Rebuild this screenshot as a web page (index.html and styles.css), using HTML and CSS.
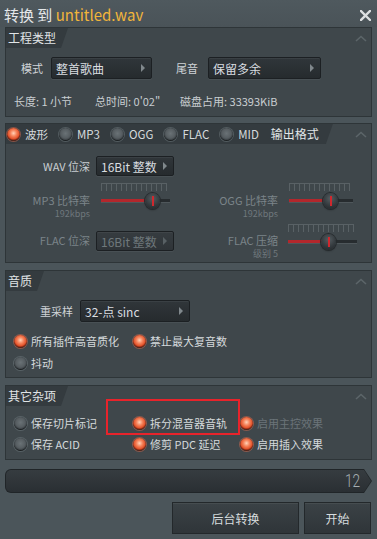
FILE: index.html
```html
<!DOCTYPE html>
<html lang="zh">
<head>
<meta charset="utf-8">
<title>转换 到 untitled.wav</title>
<link rel="stylesheet" href="styles.css">
</head>
<body>
<div class="titlebar">
  <div class="title">转换 到 <span class="file">untitled.wav</span></div>
  <svg class="close" width="11" height="11" viewBox="0 0 11 11"><path d="M1 1 L10 10 M10 1 L1 10" stroke="#dcdfe1" stroke-width="2.4" stroke-linecap="square"/></svg>
</div>

<section class="panel p1">
  <div class="phead">
    <div class="tab">工程类型</div>
    <svg class="caret" width="12" height="7" viewBox="0 0 12 7"><polyline points="1,6 6,1.5 11,6" fill="none" stroke="#5c6569" stroke-width="1.6"/></svg>
  </div>
  <div class="body">
    <div class="dd-row">
      <span class="lbl">模式</span><div class="dd">整首歌曲</div>
      <span class="lbl">尾音</span><div class="dd">保留多余</div>
    </div>
    <div class="info">
      <span>长度: 1 小节</span><span>总时间: 0'02"</span><span>磁盘占用: 33393KiB</span>
    </div>
  </div>
</section>

<section class="panel p2">
  <div class="phead">
    <div class="tab tab-opts">
      <span class="opt"><i class="rb on"></i>波形</span>
      <span class="opt"><i class="rb"></i>MP3</span>
      <span class="opt"><i class="rb"></i>OGG</span>
      <span class="opt"><i class="rb"></i>FLAC</span>
      <span class="opt"><i class="rb"></i>MID</span>
      <span class="tab-title">输出格式</span>
    </div>
    <svg class="caret" width="12" height="7" viewBox="0 0 12 7"><polyline points="1,6 6,1.5 11,6" fill="none" stroke="#5c6569" stroke-width="1.6"/></svg>
  </div>
  <div class="body fmt">
    <span class="lbl l1 r1">WAV 位深</span>
    <div class="dd small r1c">16Bit 整数</div>

    <div class="lblock l1 r2"><div class="dim">MP3 比特率</div><div class="sub">192kbps</div></div>
    <div class="slider s-mp3">
      <div class="ticks"></div>
      <div class="track"><div class="fill" style="width:49px"></div><div class="knob" style="left:44px"></div></div>
    </div>
    <div class="lblock l3 r2"><div class="dim">OGG 比特率</div><div class="sub">192kbps</div></div>
    <div class="slider s-ogg">
      <div class="ticks"></div>
      <div class="track"><div class="fill" style="width:36px"></div><div class="knob" style="left:34px"></div></div>
    </div>

    <span class="lbl l1 r3 dim">FLAC 位深</span>
    <div class="dd small dis r3c">16Bit 整数</div>
    <div class="lblock l3 r3"><div class="dim">FLAC 压缩</div><div class="sub">级别 5</div></div>
    <div class="slider s-flac">
      <div class="ticks"></div>
      <div class="track"><div class="fill" style="width:34px"></div><div class="knob" style="left:33px"></div></div>
    </div>
  </div>
</section>

<section class="panel p3">
  <div class="phead">
    <div class="tab">音质</div>
    <svg class="caret" width="12" height="7" viewBox="0 0 12 7"><polyline points="1,6 6,1.5 11,6" fill="none" stroke="#5c6569" stroke-width="1.6"/></svg>
  </div>
  <div class="body">
    <div class="rs-row"><span class="lbl">重采样</span><div class="dd rs">32-点 sinc</div></div>
    <div class="opts q-opts">
      <span class="opt"><i class="rb on"></i>所有插件高音质化</span>
      <span class="opt"><i class="rb on"></i>禁止最大复音数</span>
      <span></span>
      <span class="opt"><i class="rb"></i>抖动</span>
    </div>
  </div>
</section>

<section class="panel p4">
  <div class="phead">
    <div class="tab">其它杂项</div>
    <svg class="caret" width="12" height="7" viewBox="0 0 12 7"><polyline points="1,6 6,1.5 11,6" fill="none" stroke="#5c6569" stroke-width="1.6"/></svg>
  </div>
  <div class="body">
    <div class="opts m-opts">
      <span class="opt"><i class="rb"></i>保存切片标记</span>
      <span class="opt"><i class="rb on"></i>拆分混音器音轨</span>
      <span class="opt disabled"><i class="rb on"></i>启用主控效果</span>
      <span class="opt"><i class="rb"></i>保存 ACID</span>
      <span class="opt"><i class="rb on"></i>修剪 PDC 延迟</span>
      <span class="opt"><i class="rb on"></i>启用插入效果</span>
    </div>
  </div>
  <div class="highlight"></div>
</section>

<div class="progress"><div class="bar"><span class="num">12</span></div></div>

<div class="actions">
  <div class="btn wide">后台转换</div>
  <div class="btn narrow">开始</div>
</div>
</body>
</html>
```

FILE: styles.css
```css
* { box-sizing: border-box; }
html, body { margin: 0; padding: 0; }
body {
  width: 377px;
  height: 539px;
  overflow: hidden;
  background: #4b555a;
  font-family: "Noto Sans CJK SC", "Noto Sans", sans-serif;
  font-size: 11px;
  color: #cdd3d6;
}

.titlebar {
  height: 27px;
  display: flex;
  align-items: center;
  justify-content: space-between;
  padding: 3px 6px 0 4px;
  background: linear-gradient(#4f595e, #4a5358);
}
.title { font-size: 15px; line-height: 20px; color: #e4e7e9; }
.title .file { color: #f2b53a; }

.panel {
  margin: 0 5px;
  border: 1px solid #2e3538;
  background: #3f474b;
  position: relative;
}
.p1 { height: 90px; }
.p2 { margin-top: 6px; height: 140px; }
.p3 { margin-top: 7px; height: 108px; }
.p4 { margin-top: 7px; height: 75px; }

.phead {
  height: 20px;
  display: flex;
  align-items: center;
  justify-content: space-between;
}
.tab {
  height: 20px;
  line-height: 20px;
  padding: 0 12px 0 2px;
  background: #343b3f;
  clip-path: polygon(0 0, 100% 0, calc(100% - 7px) 100%, 0 100%);
  font-size: 12px;
  color: #e1e5e7;
}
.caret { margin-right: 4px; }

.tab-opts {
  display: flex;
  align-items: center;
  gap: 11px;
  padding: 0 14px 0 1px;
  font-size: 11.5px;
}
.tab-opts .opt { gap: 5px; }
.tab-title { font-size: 12px; color: #e1e5e7; margin-left: 1px; }

.opt {
  display: flex;
  align-items: center;
  gap: 4px;
  line-height: 16px;
  white-space: nowrap;
  color: #d5dadc;
}
.opt.disabled { color: #6b7479; }

.rb {
  display: inline-block;
  flex: none;
  width: 13px;
  height: 13px;
  border-radius: 50%;
  background: radial-gradient(circle at 50% 42%, #6a7276 0, #555c60 48%, #3e4448 62%, #1c2022 70%, #1c2022 100%);
  box-shadow: 0 0 0 1px rgba(120,130,135,0.45);
}
.rb.on {
  background: radial-gradient(circle at 50% 40%, #ffd2b8 0, #f6845c 30%, #e2542c 55%, #8e2a14 66%, #3a1a12 76%, #2a1d1a 100%);
  box-shadow: 0 0 0 1px rgba(230,110,80,0.45);
}

.lbl { white-space: nowrap; }

.dd {
  height: 22px;
  display: flex;
  align-items: center;
  justify-content: space-between;
  padding: 0 6px 0 4px;
  background: linear-gradient(#30363a, #262b2e);
  border: 1px solid #1c2023;
  border-radius: 2px;
  font-size: 12px;
  color: #d9dde0;
  box-shadow: inset 0 1px 0 rgba(255,255,255,0.05), 0 1px 0 rgba(255,255,255,0.05);
  white-space: nowrap;
}
.dd::after {
  content: "";
  border-left: 4px solid #80888c;
  border-top: 4px solid transparent;
  border-bottom: 4px solid transparent;
}
.dd.dis { color: #6f787c; background: linear-gradient(#363c40, #2f3438); }
.dd.dis::after { border-left-color: #586064; }

/* panel 1 */
.p1 .body { padding-top: 9px; }
.dd-row {
  display: grid;
  grid-template-columns: 45px 101px 56px 113px;
  height: 22px;
  align-items: center;
}
.dd-row .lbl { text-align: right; padding-right: 8px; color: #cfd4d7; }
.dd-row .lbl:nth-of-type(2) { padding-right: 10px; }
.info {
  margin-top: 15px;
  display: grid;
  grid-template-columns: 81px 85px auto;
  padding-left: 8px;
  line-height: 14px;
  color: #c9ced1;
}

/* panel 2 */
.fmt {
  padding-top: 12px;
  display: grid;
  grid-template-columns: 90px 100px 92px 1fr;
  grid-template-rows: 20px 45px 38px;
}
.fmt .l1 { grid-column: 1; text-align: right; padding-right: 6px; }
.fmt .l3 { grid-column: 3; text-align: right; padding-right: 10px; }
.fmt .r1 { grid-row: 1; align-self: center; line-height: 14px; color: #c8ced1; }
.fmt .r1c { grid-row: 1; grid-column: 2; }
.dd.small { height: 20px; width: 78px; }
.fmt .r2 { grid-row: 2; margin-top: 17px; }
.fmt .r3 { grid-row: 3; margin-top: 12px; }
.fmt .r3c { grid-row: 3; grid-column: 2; margin-top: 10px; }
.lbl.r3 { line-height: 14px; }
.lblock { line-height: 14px; }
.dim { color: #7b8489; white-space: nowrap; }
.sub { font-size: 9px; line-height: 11px; margin-top: 1px; color: #6f787d; }

.slider { align-self: start; }
.s-mp3 { grid-row: 2; grid-column: 2; margin: 7px 0 0 5px; width: 69px; }
.s-ogg { grid-row: 2; grid-column: 4; margin: 7px 0 0 1px; width: 64px; }
.s-flac { grid-row: 3; grid-column: 4; margin: 3px 0 0 0; width: 69px; }

.ticks {
  height: 8px;
  margin-right: 3px;
  border-top: 1px solid #596165;
  border-left: 1px solid #596165;
  border-right: 1px solid #596165;
  background: repeating-linear-gradient(to right, transparent 0 4px, #596165 4px 5px);
}
.track {
  position: relative;
  height: 16px;
  margin-top: 2px;
}
.track::before {
  content: "";
  position: absolute;
  left: 0; right: 0; top: 6px;
  height: 3px;
  background: #272c2f;
  border-bottom: 1px solid #4f575b;
}
.fill {
  position: absolute;
  left: 0; top: 6px;
  height: 3px;
  background: #b3272c;
}
.knob {
  position: absolute;
  top: 0;
  width: 15px;
  height: 16px;
  border-radius: 50%;
  background: radial-gradient(circle at 50% 35%, #555d61 0, #343a3e 55%, #1f2326 100%);
  box-shadow: 0 0 0 1px #262b2e, 0 1px 2px rgba(0,0,0,0.4);
}
.knob::after {
  content: "";
  position: absolute;
  left: 7px; top: 3px;
  width: 1.5px; height: 10px;
  background: #cf282e;
}

/* panel 3 */
.p3 .body { padding-top: 9px; }
.rs-row { display: flex; align-items: center; height: 22px; }
.rs-row .lbl { width: 74px; text-align: right; padding-right: 7px; color: #cfd4d7; }
.dd.rs { width: 110px; }

.opts {
  display: grid;
  grid-template-columns: 119px 107px 1fr;
  grid-auto-rows: 16px;
  padding-left: 8px;
}
.q-opts { margin-top: 11px; row-gap: 6px; }
.q-opts .opt:nth-child(4) { grid-column: 1; }

/* panel 4 */
.p4 .body { padding-top: 9px; }
.m-opts { row-gap: 5px; }

.highlight {
  position: absolute;
  left: 100px;
  top: 13px;
  width: 134px;
  height: 36px;
  border: 2px solid #e8232b;
}

/* progress */
.progress {
  margin: 9px 5px 0;
  height: 24px;
  padding: 1px;
  background: #202528;
  border-radius: 6px 0 0 6px;
  clip-path: polygon(0 0, calc(100% - 8px) 0, 100% 50%, calc(100% - 8px) 100%, 0 100%);
}
.bar {
  height: 100%;
  display: flex;
  align-items: center;
  justify-content: flex-end;
  padding-right: 11px;
  background: linear-gradient(#363c40, #2a2f33);
  border-radius: 5px 0 0 5px;
  clip-path: polygon(0 0, calc(100% - 7px) 0, 100% 50%, calc(100% - 7px) 100%, 0 100%);
}
.num {
  display: inline-block;
  font-family: Roboto, "Liberation Sans", sans-serif;
  font-weight: 300;
  font-size: 19px;
  line-height: 20px;
  color: #a7afb3;
  transform: scaleX(0.72);
  transform-origin: right center;
}

/* buttons */
.actions {
  display: flex;
  justify-content: flex-end;
  gap: 5px;
  margin-top: 9px;
  padding-right: 6px;
}
.btn {
  height: 32px;
  display: flex;
  align-items: center;
  justify-content: center;
  border: 1px solid #23282b;
  background: linear-gradient(#3b4246, #2f3539);
  box-shadow: inset 0 1px 0 rgba(255,255,255,0.06);
  color: #d7dcde;
  font-size: 12px;
}
.btn.wide { width: 127px; }
.btn.narrow { width: 67px; }
```
